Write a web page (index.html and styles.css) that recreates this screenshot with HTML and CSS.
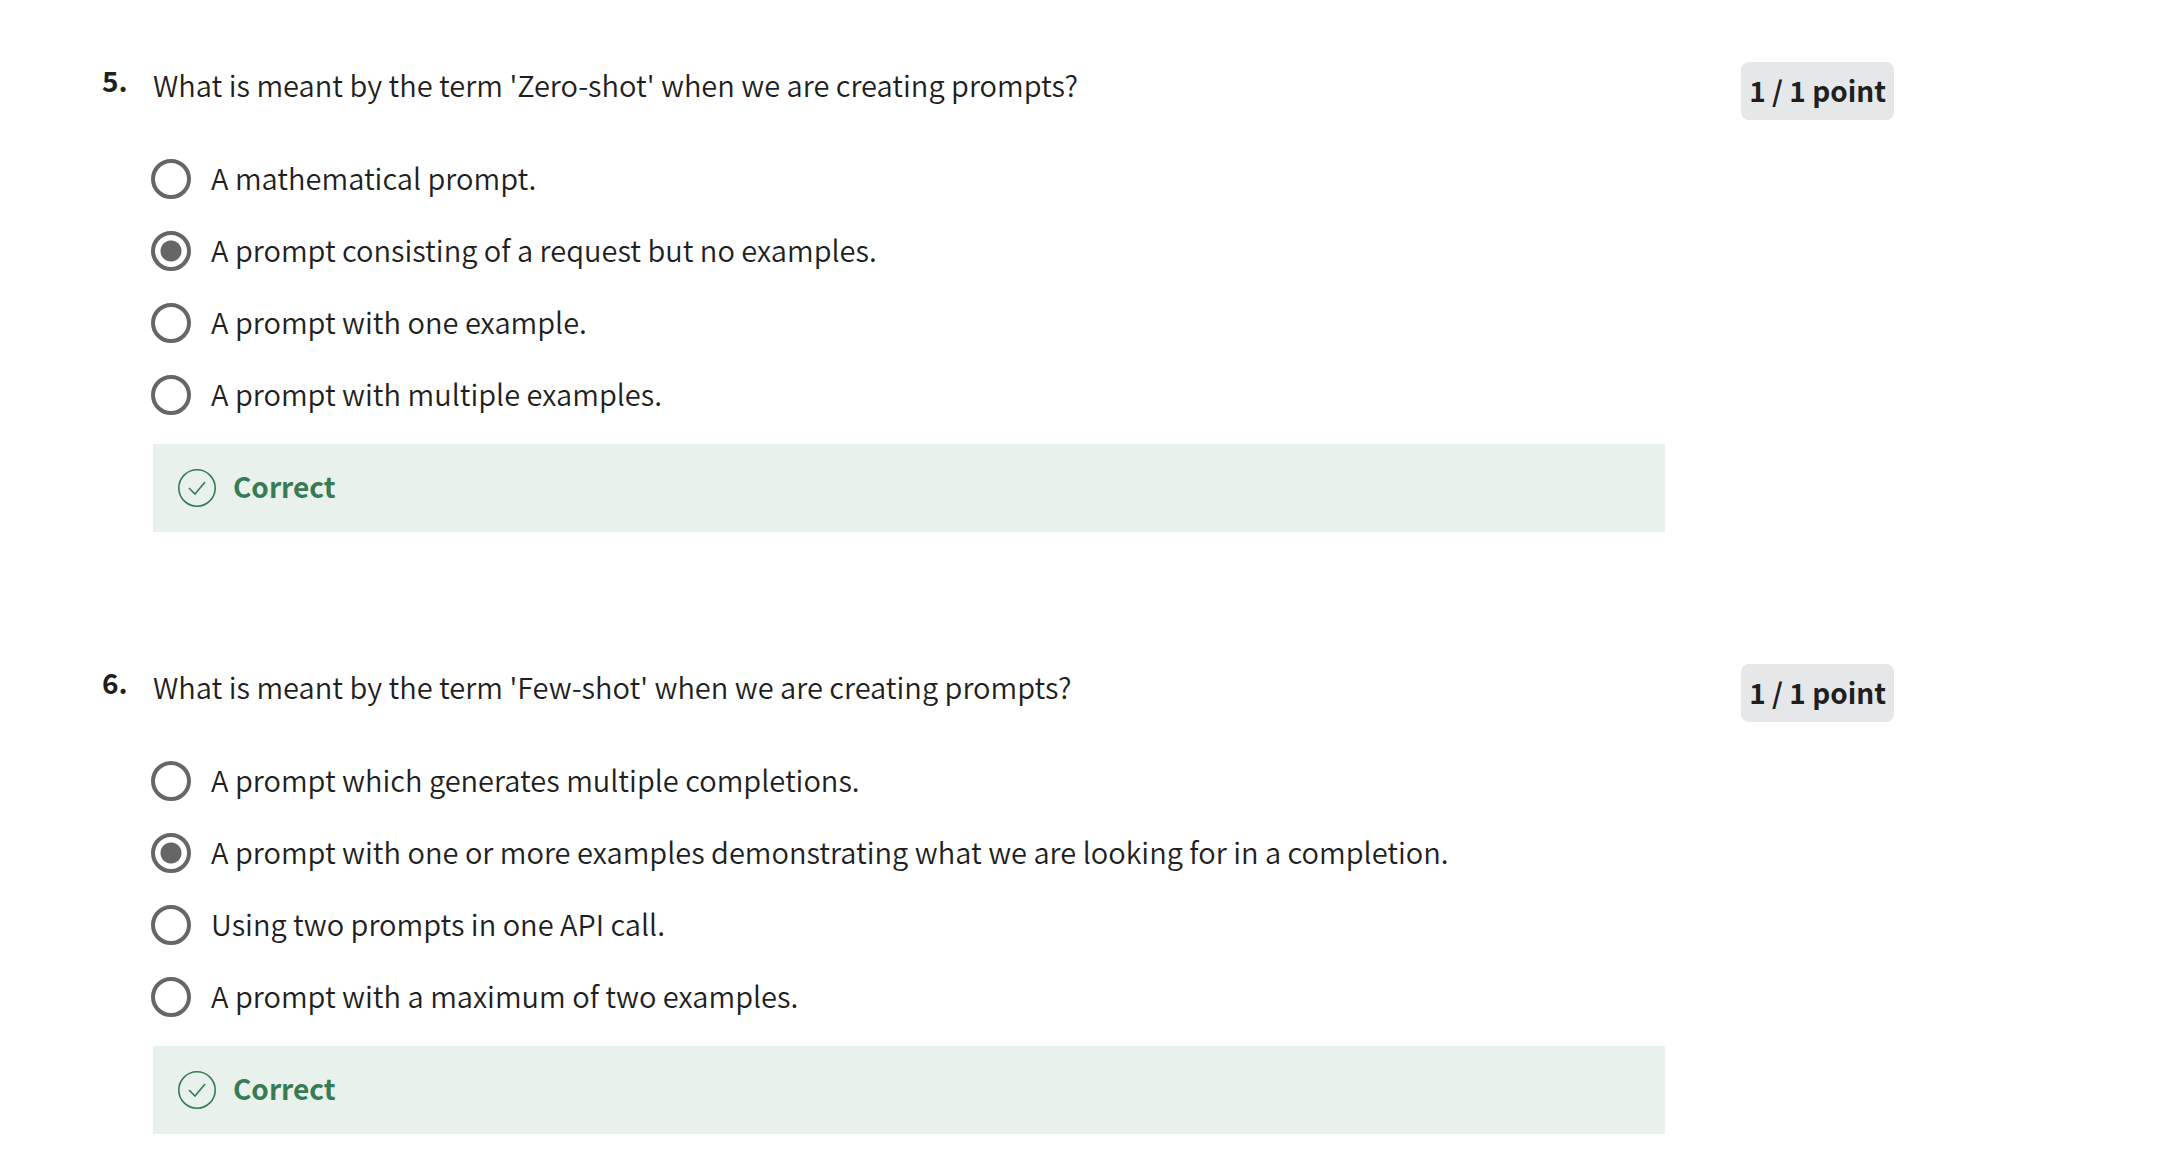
FILE: index.html
```html
<!DOCTYPE html>
<html lang="en">
<head>
<meta charset="utf-8">
<title>Quiz results</title>
<link rel="stylesheet" href="styles.css">
</head>
<body>
<main class="quiz">
  <section class="question">
    <h2 class="number">5.</h2>
    <fieldset class="body">
      <legend class="prompt">What is meant by the term 'Zero-shot' when we are creating prompts?</legend>
      <label class="option"><input type="radio" name="q5"><span class="text">A mathematical prompt.</span></label>
      <label class="option"><input type="radio" name="q5" checked><span class="text">A prompt consisting of a request but no examples.</span></label>
      <label class="option"><input type="radio" name="q5"><span class="text">A prompt with one example.</span></label>
      <label class="option"><input type="radio" name="q5"><span class="text">A prompt with multiple examples.</span></label>
      <div class="feedback">
        <svg class="tick" viewBox="0 0 40 40" aria-hidden="true"><circle cx="20" cy="20" r="18.2"/><path d="M12 20l6 6L28 14"/></svg>
        <span class="text">Correct</span>
      </div>
    </fieldset>
    <div class="score"><span class="badge">1 / 1 point</span></div>
  </section>
  <section class="question">
    <h2 class="number">6.</h2>
    <fieldset class="body">
      <legend class="prompt">What is meant by the term 'Few-shot' when we are creating prompts?</legend>
      <label class="option"><input type="radio" name="q6"><span class="text">A prompt which generates multiple completions.</span></label>
      <label class="option"><input type="radio" name="q6" checked><span class="text">A prompt with one or more examples demonstrating what we are looking for in a completion.</span></label>
      <label class="option"><input type="radio" name="q6"><span class="text">Using two prompts in one API call.</span></label>
      <label class="option"><input type="radio" name="q6"><span class="text">A prompt with a maximum of two examples.</span></label>
      <div class="feedback">
        <svg class="tick" viewBox="0 0 40 40" aria-hidden="true"><circle cx="20" cy="20" r="18.2"/><path d="M12 20l6 6L28 14"/></svg>
        <span class="text">Correct</span>
      </div>
    </fieldset>
    <div class="score"><span class="badge">1 / 1 point</span></div>
  </section>
</main>
</body>
</html>
```
FILE: styles.css
```css
* {
  box-sizing: border-box;
}

body {
  margin: 0;
  background: #fff;
  color: #1f1f1f;
  font: 350 29px/44px "Noto Sans CJK SC", "Noto Sans", sans-serif;
}

.quiz {
  display: grid;
  gap: 132px;
  padding: 62px 266px 32px 102px;
}

.question {
  display: grid;
  grid-template-columns: 51px minmax(0, 1fr) 229px;
}

.number {
  margin: 0;
  font-size: 28px;
  font-weight: 700;
  line-height: 36px;
}

.body {
  min-width: 0;
  margin: 0;
  padding: 0;
  border: 0;
}

.prompt {
  padding: 0;
  margin-bottom: 37px;
}

.option {
  display: flex;
  align-items: center;
  gap: 20px;
  min-height: 72px;
}

.text {
  padding-bottom: 4px;
}

.option input {
  appearance: none;
  flex: none;
  width: 40px;
  height: 40px;
  margin: 0 0 0 -2px;
  border: 4px solid #666;
  border-radius: 50%;
}

.option input:checked {
  background: radial-gradient(circle, #666 10px, transparent 11px);
}

.feedback {
  display: flex;
  align-items: center;
  gap: 16px;
  min-height: 88px;
  margin-top: 13px;
  padding: 0 24px;
  background: #e8f1ec;
  color: #387b53;
  font-size: 28px;
  font-weight: 700;
}

.tick {
  flex: none;
  width: 40px;
  height: 40px;
  fill: none;
  stroke: currentColor;
  stroke-width: 1.6;
}

.score {
  text-align: right;
}

.badge {
  display: inline-block;
  padding: 6px 8px 8px;
  border-radius: 8px;
  background: #e5e7e8;
  font-size: 28px;
  font-weight: 700;
}
```
